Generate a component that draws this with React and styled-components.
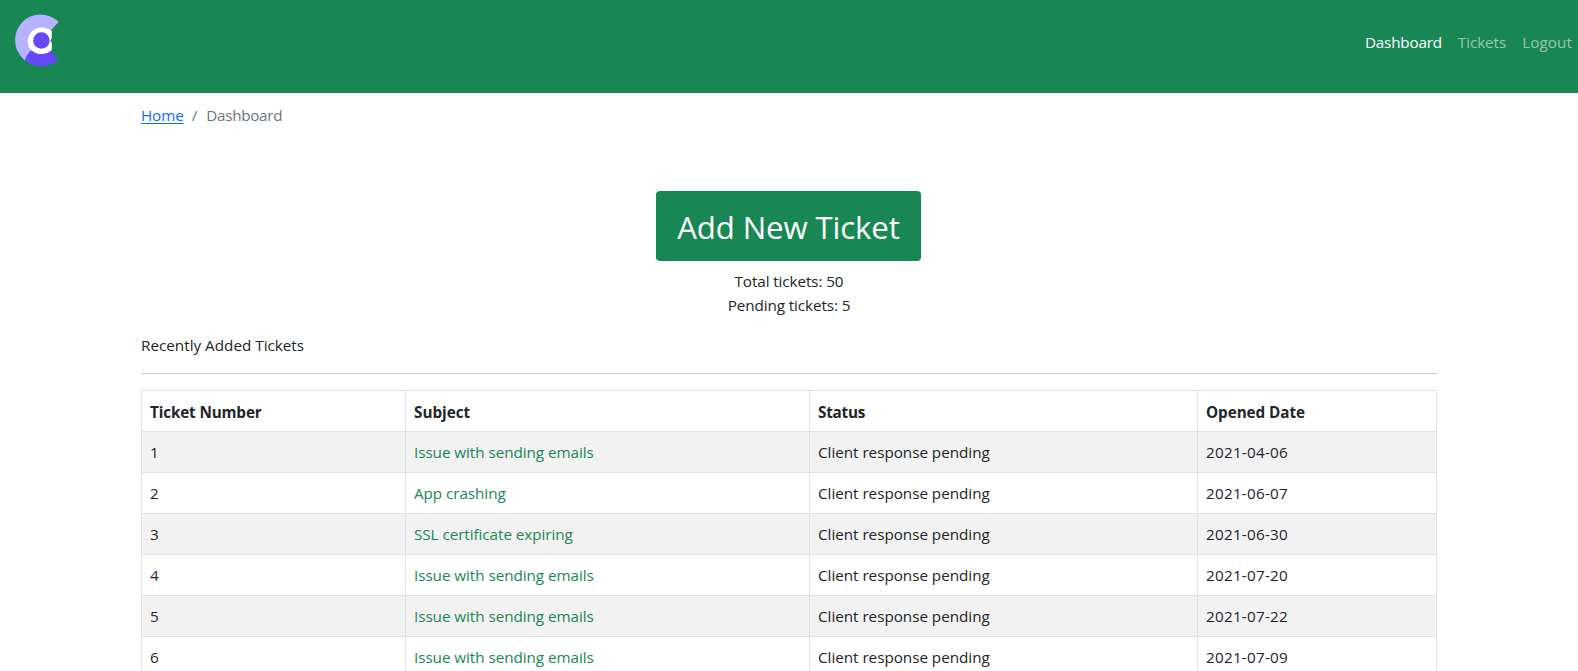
import React from "react";
import styled, { createGlobalStyle } from "styled-components";

const GREEN = "#198754";

const GlobalStyle = createGlobalStyle`
  * { box-sizing: border-box; }
  html, body { margin: 0; }
  body {
    height: 671px;
    overflow: hidden;
    background: #fff;
    color: #212529;
    font-family: "Segoe UI", "Open Sans", "Noto Sans", sans-serif;
    font-size: 15.25px;
    line-height: 24px;
  }
`;

const Navbar = styled.nav`
  height: 93px;
  padding: 8px 6px 8px 8px;
  display: flex;
  justify-content: space-between;
  align-items: flex-start;
  background: ${GREEN};
`;

const Logo = styled.svg`
  display: block;
  width: 64px;
  height: 64px;
`;

const NavLinks = styled.div`
  display: flex;
  gap: 16px;
  padding-top: 22px;
`;

const NavLink = styled.a`
  color: ${(p) => (p.$active ? "#fff" : "rgba(255, 255, 255, 0.55)")};
  letter-spacing: ${(p) => p.$track || 0}px;
  text-decoration: none;
`;

const Container = styled.main`
  width: 1320px;
  margin: 0 auto;
  padding: 10px 12px 0;
`;

const Breadcrumb = styled.ol`
  display: flex;
  gap: 8px;
  height: 24px;
  margin: 0 0 64px;
  padding: 0;
  list-style: none;
  color: #6c757d;
`;

const HomeLink = styled.a`
  color: #0d6efd;
  letter-spacing: -0.12px;
  text-decoration: underline;
  text-underline-offset: 2px;
  text-decoration-thickness: 1px;
`;

const Current = styled.li`
  margin-left: 1px;
  letter-spacing: -0.3px;
`;

const Summary = styled.section`
  display: flex;
  flex-direction: column;
  align-items: center;
  margin-bottom: 16px;
`;

const AddButton = styled.button`
  width: 265px;
  height: 70px;
  margin: 0 1px 8px 0;
  padding: 1px 0 0;
  border: 0;
  border-radius: 4px;
  background: ${GREEN};
  color: #fff;
  font-family: inherit;
  font-size: 31.2px;
  line-height: 48px;
  letter-spacing: -0.13px;
`;

const Count = styled.div`
  letter-spacing: -0.1px;
`;

const Divider = styled.hr`
  height: 1px;
  margin: 16px 0;
  border: 0;
  background: #c8c9ca;
`;

const Table = styled.table`
  width: 1295px;
  table-layout: fixed;
  border-collapse: collapse;
`;

const Col = styled.col`
  width: ${(p) => p.$width}px;
`;

const HeadCell = styled.th`
  height: 41px;
  padding: 9px 8px 7px;
  border: 1px solid #dee2e6;
  text-align: left;
  font-weight: 700;
  letter-spacing: ${(p) => p.$track}px;
`;

const Row = styled.tr`
  background: ${(p) => (p.$striped ? "#f2f2f2" : "#fff")};
`;

const Cell = styled.td`
  height: 41px;
  padding: 8px;
  border: 1px solid #dee2e6;
  letter-spacing: ${(p) => p.$track || 0}px;
`;

const TicketLink = styled.a`
  color: ${GREEN};
  text-decoration: none;
  letter-spacing: -0.06px;
`;

const columns = [
  { label: "Ticket Number", width: 264, track: -0.14 },
  { label: "Subject", width: 404, track: 0 },
  { label: "Status", width: 388, track: -0.24 },
  { label: "Opened Date", width: 239, track: -0.05 },
];

const tickets = [
  ["Issue with sending emails", "2021-04-06"],
  ["App crashing", "2021-06-07"],
  ["SSL certificate expiring", "2021-06-30"],
  ["Issue with sending emails", "2021-07-20"],
  ["Issue with sending emails", "2021-07-22"],
  ["Issue with sending emails", "2021-07-09"],
];

export default function App() {
  return (
    <>
      <GlobalStyle />
      <Navbar>
        <Logo viewBox="8 8 64 64" aria-label="Logo">
          <path
            d="M58 21C47 11.500 31 12.500 22 22.500C12 33.500 13 50.500 25 60.300C27 55 30 52 35 49L51 31C53 27.500 55 25.500 58 23Z"
            fill="#b5b2ff"
          />
          <path
            d="M25 60.300C33.500 67.800 48.500 68.200 58 60.800C58 58.500 53.500 55.500 51.500 50.500L33 49C28.500 51.800 26.300 55.500 25 60.300Z"
            fill="#6648ff"
          />
          <path
            d="M51.800 31.200C44 24.500 32.500 27 28.800 36C25 46 32 54 41.400 54C45.500 54 49 52.500 51.800 50V43L50.400 40.500L51.800 38Z"
            fill="#fff"
          />
          <circle cx="41.400" cy="40.500" r="8.300" fill="#6648ff" />
        </Logo>
        <NavLinks>
          <NavLink href="#" $active $track={-0.2}>Dashboard</NavLink>
          <NavLink href="#" $track={-0.08}>Tickets</NavLink>
          <NavLink href="#" $track={0.08}>Logout</NavLink>
        </NavLinks>
      </Navbar>
      <Container>
        <Breadcrumb>
          <li><HomeLink href="#">Home</HomeLink></li>
          <li>/</li>
          <Current>Dashboard</Current>
        </Breadcrumb>
        <Summary>
          <AddButton>Add New Ticket</AddButton>
          <Count>Total tickets: 50</Count>
          <Count>Pending tickets: 5</Count>
        </Summary>
        <div>Recently Added Tickets</div>
        <Divider />
        <Table>
          <colgroup>
            {columns.map((c) => <Col key={c.label} $width={c.width} />)}
          </colgroup>
          <thead>
            <tr>
              {columns.map((c) => (
                <HeadCell key={c.label} $track={c.track}>{c.label}</HeadCell>
              ))}
            </tr>
          </thead>
          <tbody>
            {tickets.map(([subject, date], i) => (
              <Row key={i} $striped={i % 2 === 0}>
                <Cell>{i + 1}</Cell>
                <Cell><TicketLink href="#">{subject}</TicketLink></Cell>
                <Cell $track={-0.03}>Client response pending</Cell>
                <Cell $track={0.24}>{date}</Cell>
              </Row>
            ))}
          </tbody>
        </Table>
      </Container>
    </>
  );
}
